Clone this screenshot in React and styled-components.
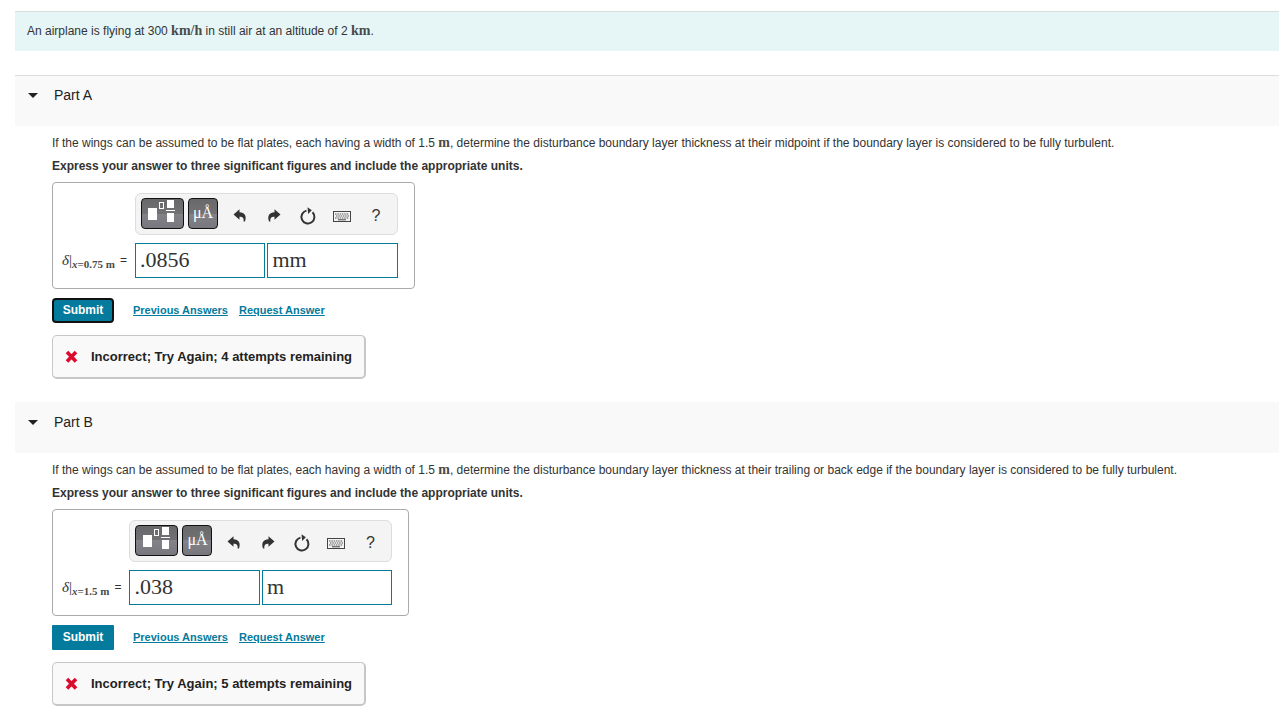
import { useState } from "react";
import styled, { createGlobalStyle } from "styled-components";

const parts = [
  {
    id: "a",
    title: "Part A",
    place: "midpoint",
    position: "0.75",
    value: ".0856",
    unit: "mm",
    attempts: 4,
    divided: true,
    focused: true,
  },
  {
    id: "b",
    title: "Part B",
    place: "trailing or back edge",
    position: "1.5",
    value: ".038",
    unit: "m",
    attempts: 5,
  },
];

export default function App() {
  return (
    <>
      <GlobalStyle />
      <Page>
        <Intro>
          An airplane is flying at 300 <Unit>km/h</Unit> in still air at an
          altitude of 2 <Unit>km</Unit>.
        </Intro>
        {parts.map((part) => (
          <Part key={part.id} {...part} />
        ))}
      </Page>
    </>
  );
}

function Part({ id, title, place, position, value, unit, attempts, divided, focused }) {
  const [open, setOpen] = useState(true);
  const [answer, setAnswer] = useState(value);
  const [answerUnit, setAnswerUnit] = useState(unit);

  return (
    <section>
      <PartHeader $divided={divided}>
        <PartToggle type="button" aria-expanded={open} onClick={() => setOpen(!open)}>
          <Caret />
          {title}
        </PartToggle>
      </PartHeader>
      {open && (
        <PartBody>
          <Question>
            If the wings can be assumed to be flat plates, each having a width
            of 1.5 <Unit>m</Unit>, determine the disturbance boundary layer
            thickness at their {place} if the boundary layer is considered to be
            fully turbulent.
          </Question>
          <Instruction>
            Express your answer to three significant figures and include the
            appropriate units.
          </Instruction>
          <AnswerBox>
            <Toolbar />
            <AnswerLabel htmlFor={`value-${id}`}>
              <Symbol>
                <i>δ</i>|
              </Symbol>
              <Subscript>
                <i>x</i>={position} m
              </Subscript>
              <Equals>=</Equals>
            </AnswerLabel>
            <Fields>
              <Field
                id={`value-${id}`}
                value={answer}
                onChange={(e) => setAnswer(e.target.value)}
              />
              <Field
                aria-label="Units"
                value={answerUnit}
                onChange={(e) => setAnswerUnit(e.target.value)}
              />
            </Fields>
          </AnswerBox>
          <Actions>
            <Submit type="button" $focused={focused}>
              Submit
            </Submit>
            <ActionLink href="#previous">Previous Answers</ActionLink>
            <ActionLink href="#request">Request Answer</ActionLink>
          </Actions>
          <Feedback>
            <CrossIcon />
            Incorrect; Try Again; {attempts} attempts remaining
          </Feedback>
        </PartBody>
      )}
    </section>
  );
}

function Toolbar() {
  return (
    <ToolbarBox>
      <DarkButton type="button" aria-label="Templates" $wide>
        <TemplateIcon />
      </DarkButton>
      <DarkButton type="button" aria-label="Symbols">
        μÅ
      </DarkButton>
      <Tools>
        <ToolButton type="button" aria-label="Undo">
          <ArrowIcon />
        </ToolButton>
        <ToolButton type="button" aria-label="Redo">
          <ArrowIcon flipped />
        </ToolButton>
        <ToolButton type="button" aria-label="Reset">
          <ResetIcon />
        </ToolButton>
        <ToolButton type="button" aria-label="Keyboard shortcuts">
          <KeyboardIcon />
        </ToolButton>
        <ToolButton type="button" aria-label="Help">
          ?
        </ToolButton>
      </Tools>
    </ToolbarBox>
  );
}

function TemplateIcon() {
  return (
    <svg width="28" height="24" viewBox="0 0 28 24">
      <rect x="0" y="9" width="9" height="12" fill="#fff" />
      <rect x="11.5" y="3.5" width="4" height="6" fill="none" stroke="#fff" />
      <rect x="19" y="1" width="7" height="8" fill="#fff" />
      <rect x="18" y="11" width="9" height="1" fill="#fff" />
      <rect x="19" y="14" width="7" height="9" fill="#fff" />
    </svg>
  );
}

function ArrowIcon({ flipped }) {
  return (
    <svg width="14" height="14" viewBox="0 0 14 14">
      <path
        d="M0.5 5.500 6.500 0.300V3.200C11.500 3.400 14 6.600 12 12.600H10.600C11 9 9.800 7.900 6.500 7.800V10.700Z"
        fill="#333"
        transform={flipped ? "matrix(-1 0 0 1 14 0)" : undefined}
      />
    </svg>
  );
}

function ResetIcon() {
  return (
    <svg width="18" height="20" viewBox="0 0 18 20">
      <path d="M13.500 6.300A6.500 6.500 0 1 1 7.500 4.600" fill="none" stroke="#333" strokeWidth="2" />
      <path d="M8.500 1.200 12.800 4.300 9.200 8Z" fill="#333" />
    </svg>
  );
}

function KeyboardIcon() {
  return (
    <svg width="18" height="14" viewBox="0 0 18 14">
      <rect x="0.5" y="2.5" width="17" height="10" fill="#f4f4f4" stroke="#444" />
      <path
        d="M2 5h14M3 7h13M2 9h14"
        stroke="#555"
        strokeWidth="1.200"
        strokeDasharray="1.500 0.800"
      />
      <path d="M5 10.800h8" stroke="#444" />
    </svg>
  );
}

function CrossIcon() {
  return (
    <svg width="13" height="13" viewBox="0 0 13 13">
      <path d="M2 2 11 11.500M11 2 2 11.500" stroke="#dc0a2d" strokeWidth="3.600" />
    </svg>
  );
}

const GlobalStyle = createGlobalStyle`
  * {
    box-sizing: border-box;
  }

  body {
    margin: 0;
    background: #fff;
    color: #333;
    font-family: "Liberation Sans", Arial, sans-serif;
    font-size: 12px;
    line-height: 20px;
  }

  button,
  input {
    font-family: inherit;
    margin: 0;
  }
`;

const Page = styled.main`
  padding: 11px 0 0 15px;
`;

const Intro = styled.p`
  margin: 0 0 24px;
  padding: 9px 12px 10px;
  border-top: 1px solid #d9dfdf;
  background: #e6f6f6;
`;

const Unit = styled.span`
  font-family: "Liberation Serif", "Times New Roman", serif;
  font-size: 14px;
  font-weight: bold;
  line-height: 1;
  color: #4a4a4a;
`;

const PartHeader = styled.header`
  padding: 10px 13px;
  border-top: 1px solid ${(props) => (props.$divided ? "#ddd" : "#f9f9f9")};
  background: #f9f9f9;
`;

const PartToggle = styled.button`
  display: flex;
  align-items: center;
  gap: 16px;
  height: 30px;
  padding: 0 0 12px;
  border: 0;
  background: none;
  color: #222;
  font-size: 14px;
  cursor: pointer;
`;

const Caret = styled.span`
  border: 5px solid transparent;
  border-top-color: #222;
  border-bottom: 0;
`;

const PartBody = styled.div`
  padding: 7px 0 23px 37px;
`;

const Question = styled.p`
  margin: 0 0 3px;
`;

const Instruction = styled.p`
  margin: 0 0 6px;
  font-weight: bold;
`;

const AnswerBox = styled.div`
  display: inline-grid;
  grid-template-columns: auto 263px;
  gap: 8px;
  padding: 10px 16px 10px 9px;
  border: 1px solid #aaa;
  border-radius: 4px;
  vertical-align: top;
`;

const ToolbarBox = styled.div`
  grid-column: 2;
  display: flex;
  gap: 4px;
  height: 42px;
  padding: 4px 5px;
  border: 1px solid #ddd;
  border-radius: 6px;
  background: #f4f4f4;
`;

const DarkButton = styled.button`
  display: flex;
  align-items: flex-start;
  justify-content: center;
  width: ${(props) => (props.$wide ? "43px" : "30px")};
  height: 31px;
  padding: ${(props) => (props.$wide ? "0" : "5px 0")};
  border: 1px solid #111;
  border-radius: 4px;
  background: linear-gradient(#68686a, #727275 50%, #828288 50%, #77777d);
  color: #fff;
  font-family: "Liberation Serif", "Times New Roman", serif;
  font-size: 16px;
  line-height: 18px;
`;

const Tools = styled.div`
  display: flex;
  gap: 10px;
  padding: 4px 0 0 6px;
`;

const ToolButton = styled.button`
  display: flex;
  align-items: center;
  justify-content: center;
  width: 24px;
  height: 28px;
  padding: 0;
  border: 0;
  background: none;
  color: #333;
  font-size: 16px;
`;

const AnswerLabel = styled.label`
  display: flex;
  align-items: center;
  padding-bottom: 2px;
  font-family: "Liberation Serif", "Times New Roman", serif;
`;

const Symbol = styled.span`
  font-size: 15px;
`;

const Subscript = styled.span`
  padding-top: 8px;
  font-size: 11px;
  font-weight: bold;
  color: #4a4a4a;
`;

const Equals = styled.span`
  margin-left: 5px;
  font-family: "Liberation Sans", Arial, sans-serif;
`;

const Fields = styled.div`
  display: grid;
  grid-template-columns: 1fr 1fr;
  gap: 2px;
`;

const Field = styled.input`
  width: 100%;
  height: 35px;
  padding: 0 4px 2px;
  border: 1px solid #047a9c;
  border-radius: 0;
  background: #fff;
  color: #333;
  font-family: "Liberation Serif", "Times New Roman", serif;
  font-size: 22px;
`;

const Actions = styled.div`
  display: flex;
  align-items: center;
  gap: 11px;
  margin: 9px 0 12px;
`;

const Submit = styled.button`
  width: 62px;
  height: 25px;
  margin-right: 8px;
  padding: 0 0 2px;
  border: ${(props) => (props.$focused ? "2px solid #111" : "0")};
  border-radius: ${(props) => (props.$focused ? "4px" : "1px")};
  background: #047a9c;
  color: #fff;
  font-size: 12px;
  font-weight: bold;
  cursor: pointer;
`;

const ActionLink = styled.a`
  padding-bottom: 1px;
  color: #047a9c;
  font-size: 11px;
  font-weight: bold;
`;

const Feedback = styled.div`
  display: inline-flex;
  align-items: center;
  gap: 13px;
  height: 44px;
  padding: 0 12px;
  border: 1px solid #c7c7c7;
  border-right-width: 2px;
  border-bottom-width: 2px;
  border-radius: 5px;
  background: #f9f9f9;
  color: #222;
  font-size: 13px;
  font-weight: bold;
  vertical-align: top;
`;
